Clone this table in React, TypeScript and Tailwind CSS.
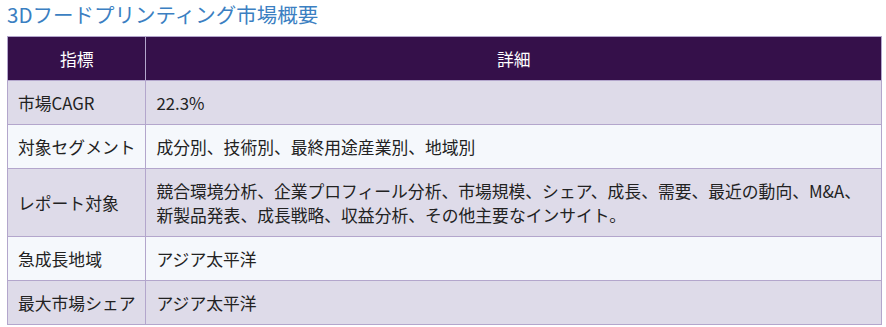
import React from "react";

const rows: [string, string][] = [
  ["市場CAGR", "22.3%"],
  ["対象セグメント", "成分別、技術別、最終用途産業別、地域別"],
  [
    "レポート対象",
    "競合環境分析、企業プロフィール分析、市場規模、シェア、成長、需要、最近の動向、M&A、新製品発表、成長戦略、収益分析、その他主要なインサイト。",
  ],
  ["急成長地域", "アジア太平洋"],
  ["最大市場シェア", "アジア太平洋"],
];

export default function App() {
  return (
    <div
      className="bg-white w-[886px] h-[327px] overflow-hidden pl-[7px]"
      style={{ fontFamily: '"Noto Sans CJK JP", "Noto Sans", sans-serif' }}
    >
      <h2 className="text-[20.5px] leading-[28px] text-[#3b7fc2] font-normal mb-[8px]">
        3Dフードプリンティング市場概要
      </h2>
      <table className="w-[875px] border-collapse text-[16.8px] leading-[24px] text-[#222]">
        <thead>
          <tr className="bg-[#35104a] text-white">
            <th className="w-[137px] border border-[#b3a6cc] py-[9.5px] font-normal text-center">指標</th>
            <th className="border border-[#b3a6cc] py-[9.5px] font-normal text-center">詳細</th>
          </tr>
        </thead>
        <tbody>
          {rows.map(([k, v], i) => (
            <tr key={k} className={i % 2 === 0 ? "bg-[#dedbe9]" : "bg-[#f5f8fc]"}>
              <td className="border border-[#b3a6cc] px-[10px] py-[9.5px] whitespace-nowrap align-middle">{k}</td>
              <td className="border border-[#b3a6cc] px-[10px] py-[9.5px] align-middle">{v}</td>
            </tr>
          ))}
        </tbody>
      </table>
    </div>
  );
}
